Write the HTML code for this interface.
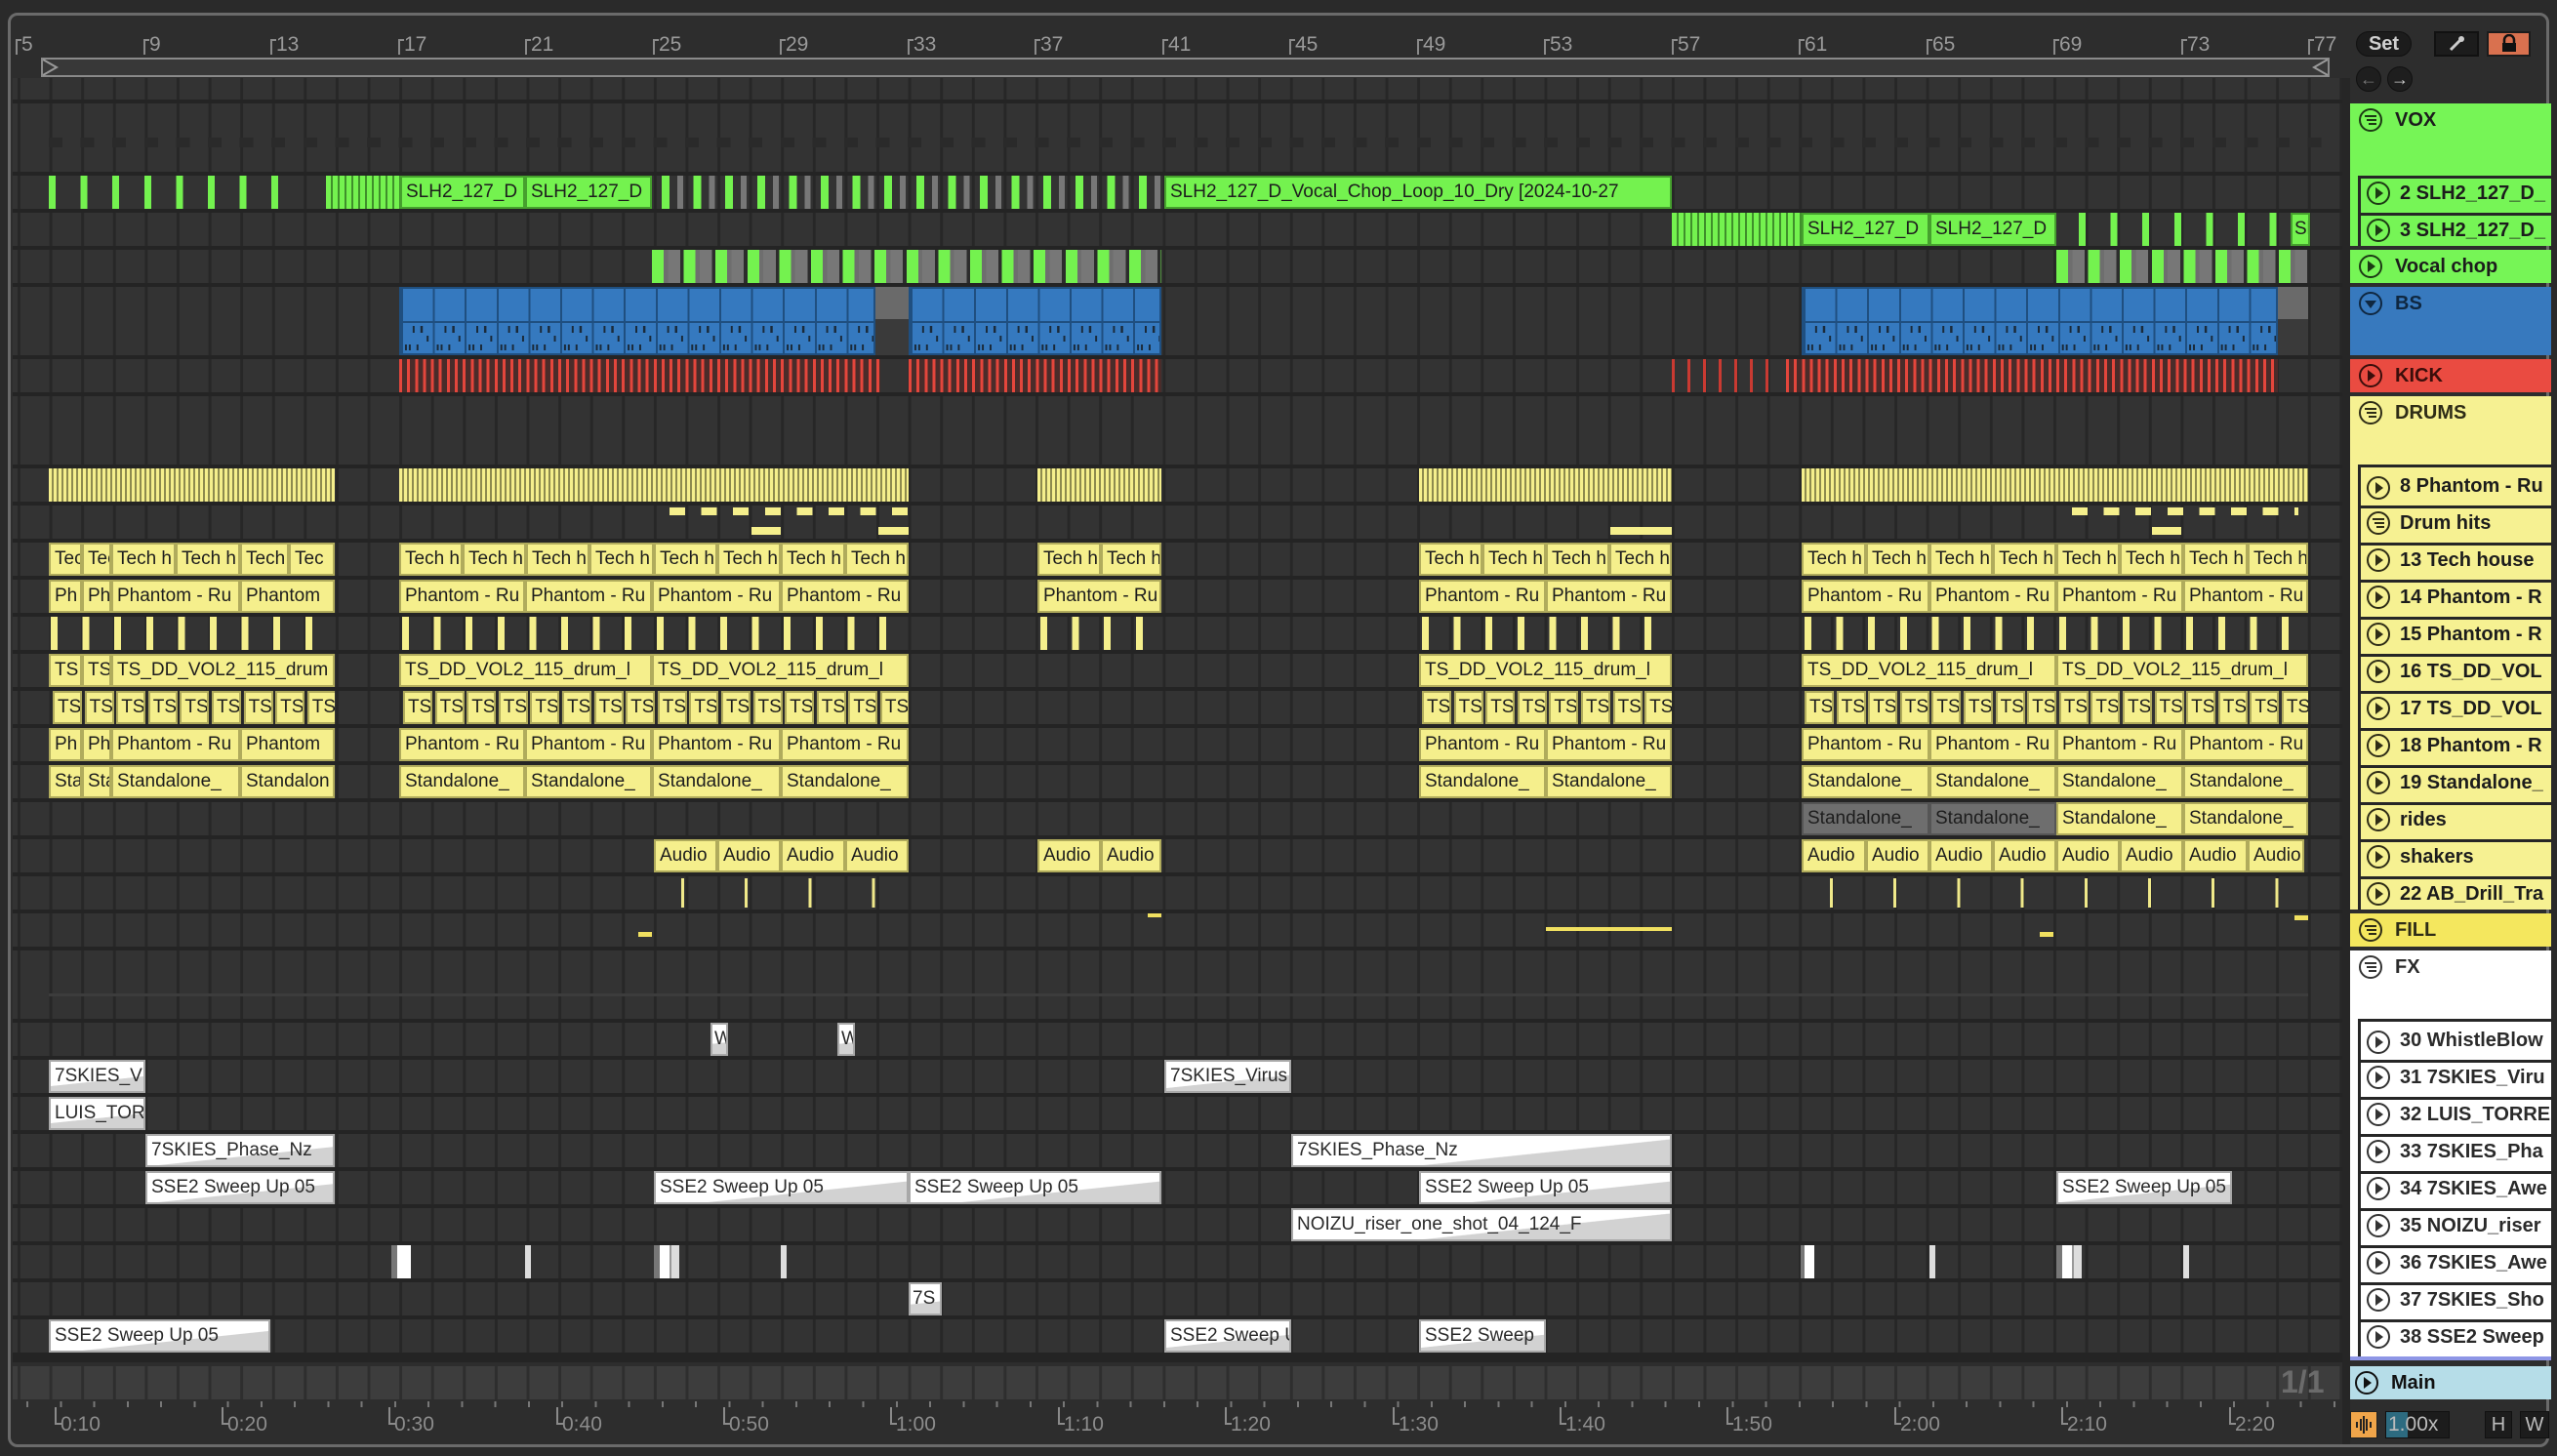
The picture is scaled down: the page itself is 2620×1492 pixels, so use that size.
<!DOCTYPE html>
<html><head><meta charset="utf-8"><style>
*{margin:0;padding:0;box-sizing:border-box}
body{width:2620px;height:1492px;background:#2a2a2a;position:relative;overflow:hidden;font-family:"Liberation Sans",sans-serif}
div{position:absolute}
.frame{left:8px;top:13px;width:2604px;height:1470px;border:3px solid #6a6a6a;border-radius:10px;background:#2d2d2d}
.r{left:13px;width:2387px;height:34px;background:repeating-linear-gradient(90deg,#272727 0 3px,transparent 3px 32.6px) 5px 0/32.6px 100% repeat-x,#333}
.t{height:70px}
.c{height:34px;border:2px solid;font-size:19px;line-height:30px;padding-left:4px;overflow:hidden;white-space:nowrap;color:#1d1d1d}
.y{background:#f5ef8c;border-color:#b0ab5c}
.g{background:#74f24f;border-color:#46a02e}
.w{background:linear-gradient(174deg,#fff 62%,#d2d2d2 63%);border-color:#a8a8a8;color:#2a2a2a}
.num{color:#9a9a9a;font-size:21px;top:34px}
.num:before{content:"";position:absolute;left:-6px;top:6px;width:4px;height:14px;border-left:2px solid #8a8a8a;border-top:2px solid #8a8a8a}
.tm{color:#8c8c8c;font-size:21px;top:1448px}
.tm:before{content:"";position:absolute;left:-6px;top:-6px;width:5px;height:16px;border-left:2px solid #8a8a8a;border-bottom:2px solid #8a8a8a}
.h{left:2408px;width:206px;height:34px;font-weight:bold;font-size:20px;color:#1c1c1c;line-height:34px;padding-left:46px;white-space:nowrap;overflow:hidden}
.ch{left:2416px;width:198px;border-left:3px solid #262626;border-top:3px solid #262626;padding-left:40px;line-height:31px}
.h svg{position:absolute;left:8px;top:4px}
.ch svg{left:5px;top:2px}
.ts{height:34px;white-space:nowrap;overflow:hidden;font-size:19px;color:#1d1d1d;line-height:30px}
.ts span{display:inline-block;width:30px;margin-right:2.6px;height:34px;background:#f5ef8c;border:2px solid #b0ab5c;padding-left:3px;overflow:hidden;vertical-align:top}
.bs{height:70px;border:2px solid #1f4f80;background:repeating-linear-gradient(90deg,#1f4f80 0 2px,transparent 2px 32.6px),linear-gradient(transparent 0 33px,#1f4f80 33px 35px,transparent 35px),repeating-linear-gradient(90deg,transparent 0 12px,#1a2a3a 12px 14px,transparent 14px 20px,#1a2a3a 20px 22px,transparent 22px 32.6px) 0 38px/32.6px 7px repeat-x,repeating-linear-gradient(90deg,transparent 0 26px,#1a2a3a 26px 28px,transparent 28px 32.6px) 0 48px/32.6px 6px repeat-x,repeating-linear-gradient(90deg,transparent 0 4px,#1a2a3a 4px 6px,transparent 6px 8px,#1a2a3a 8px 10px,transparent 10px 16px,#1a2a3a 16px 18px,transparent 18px 32.6px) 0 57px/32.6px 6px repeat-x,#3579bf}
</style></head><body>
<div class="frame"></div>
<div class="num" style="left:22px">5</div><div class="num" style="left:153px">9</div><div class="num" style="left:283px">13</div><div class="num" style="left:414px">17</div><div class="num" style="left:544px">21</div><div class="num" style="left:675px">25</div><div class="num" style="left:805px">29</div><div class="num" style="left:936px">33</div><div class="num" style="left:1066px">37</div><div class="num" style="left:1197px">41</div><div class="num" style="left:1327px">45</div><div class="num" style="left:1458px">49</div><div class="num" style="left:1588px">53</div><div class="num" style="left:1719px">57</div><div class="num" style="left:1849px">61</div><div class="num" style="left:1980px">65</div><div class="num" style="left:2110px">69</div><div class="num" style="left:2241px">73</div><div class="num" style="left:2371px">77</div>
<div style="left:42px;top:59px;width:2345px;height:20px;border:2px solid #8a8a8a;background:#383838"></div>
<svg style="position:absolute;left:42px;top:59px" width="20" height="20"><path d="M2 2 L16 10 L2 18" fill="none" stroke="#9a9a9a" stroke-width="2"/></svg>
<svg style="position:absolute;left:2367px;top:59px" width="20" height="20"><path d="M18 2 L4 10 L18 18" fill="none" stroke="#9a9a9a" stroke-width="2"/></svg>
<div style="left:13px;top:80px;width:2387px;height:1316px;background:#242424"></div>
<div class="r" style="top:80px;height:22px"></div>
<div class="r t" style="top:106px"></div>
<div class="r" style="top:180px"></div><div class="r" style="top:218px"></div><div class="r" style="top:256px"></div>
<div class="r t" style="top:294px"></div><div class="r" style="top:368px"></div><div class="r t" style="top:406px"></div>
<div class="r" style="top:480px"></div><div class="r" style="top:518px"></div><div class="r" style="top:556px"></div><div class="r" style="top:594px"></div><div class="r" style="top:632px"></div><div class="r" style="top:670px"></div><div class="r" style="top:708px"></div><div class="r" style="top:746px"></div><div class="r" style="top:784px"></div><div class="r" style="top:822px"></div><div class="r" style="top:860px"></div><div class="r" style="top:898px"></div><div class="r" style="top:936px"></div>
<div class="r t" style="top:974px"></div>
<div class="r" style="top:1048px"></div><div class="r" style="top:1086px"></div><div class="r" style="top:1124px"></div><div class="r" style="top:1162px"></div><div class="r" style="top:1200px"></div><div class="r" style="top:1238px"></div><div class="r" style="top:1276px"></div><div class="r" style="top:1314px"></div><div class="r" style="top:1352px"></div>
<div class="r" style="top:1400px;background:repeating-linear-gradient(90deg,#2e2e2e 0 3px,transparent 3px 32.6px) 5px 0/32.6px 100% repeat-x,#3d3d3d"></div>
<div style="left:2337px;top:1398px;color:#6b6b6b;font-weight:bold;font-size:32px">1/1</div>
<div style="left:50px;top:141px;width:2330px;height:10px;background:repeating-linear-gradient(90deg,#2a2a2a 0 14px,transparent 14px 32.6px)"></div>
<!-- VOX row 2 -->
<div style="left:50px;top:180px;width:250px;height:34px;background:repeating-linear-gradient(90deg,#74f24f 0 7px,transparent 7px 32.6px)"></div>
<div style="left:334px;top:180px;width:76px;height:34px;background:repeating-linear-gradient(90deg,#74f24f 0 5px,#3f8f2b 5px 7px)"></div>
<div class="c g" style="left:410px;top:180px;width:128px">SLH2_127_D</div>
<div class="c g" style="left:538px;top:180px;width:130px">SLH2_127_D</div>
<div style="left:678px;top:180px;width:512px;height:34px;background:repeating-linear-gradient(90deg,#74f24f 0 8px,transparent 8px 16px,#777 16px 22px,transparent 22px 32.6px)"></div>
<div class="c g" style="left:1193px;top:180px;width:520px">SLH2_127_D_Vocal_Chop_Loop_10_Dry [2024-10-27</div>
<div style="left:1713px;top:218px;width:133px;height:34px;background:repeating-linear-gradient(90deg,#74f24f 0 5px,#3f8f2b 5px 7px)"></div>
<div class="c g" style="left:1846px;top:218px;width:131px">SLH2_127_D</div>
<div class="c g" style="left:1977px;top:218px;width:130px">SLH2_127_D</div>
<div style="left:2130px;top:218px;width:225px;height:34px;background:repeating-linear-gradient(90deg,#74f24f 0 7px,transparent 7px 32.6px)"></div>
<div class="c g" style="left:2347px;top:218px;width:20px;padding-left:2px">Sl</div>
<div style="left:668px;top:256px;width:522px;height:34px;background:repeating-linear-gradient(90deg,#74f24f 0 12px,#6e6e6e 12px 16.3px,#777 16.3px 29px,#2c2c2c 29px 32.6px)"></div>
<div style="left:2107px;top:256px;width:258px;height:34px;background:repeating-linear-gradient(90deg,#74f24f 0 12px,#6e6e6e 12px 16.3px,#777 16.3px 29px,#2c2c2c 29px 32.6px)"></div>
<!-- BS -->
<div class="bs" style="left:409px;top:294px;width:488px"></div>
<div style="left:897px;top:294px;width:34px;height:70px;background:linear-gradient(#6a6a6a 0 33px,#3a3a3a 33px)"></div>
<div class="bs" style="left:931px;top:294px;width:259px"></div>
<div class="bs" style="left:1846px;top:294px;width:488px"></div>
<div style="left:2334px;top:294px;width:31px;height:70px;background:linear-gradient(#6a6a6a 0 33px,#3a3a3a 33px)"></div>
<!-- KICK -->
<div style="left:409px;top:368px;width:493px;height:34px;background:repeating-linear-gradient(90deg,#e4463c 0 3px,#4a2c2a 3px 8.15px)"></div>
<div style="left:931px;top:368px;width:259px;height:34px;background:repeating-linear-gradient(90deg,#e4463c 0 3px,#4a2c2a 3px 8.15px)"></div>
<div style="left:1713px;top:368px;width:100px;height:34px;background:repeating-linear-gradient(90deg,#c93a32 0 3px,transparent 3px 16px)"></div>
<div style="left:1830px;top:368px;width:504px;height:34px;background:repeating-linear-gradient(90deg,#e4463c 0 3px,#4a2c2a 3px 8.15px)"></div>
<!-- 8 Phantom stripes -->
<div style="left:50px;top:480px;width:293px;height:34px;background:repeating-linear-gradient(90deg,#f5ef8c 0 3px,#8d8a4e 3px 5px)"></div>
<div style="left:409px;top:480px;width:522px;height:34px;background:repeating-linear-gradient(90deg,#f5ef8c 0 3px,#8d8a4e 3px 5px)"></div>
<div style="left:1063px;top:480px;width:127px;height:34px;background:repeating-linear-gradient(90deg,#f5ef8c 0 3px,#8d8a4e 3px 5px)"></div>
<div style="left:1454px;top:480px;width:259px;height:34px;background:repeating-linear-gradient(90deg,#f5ef8c 0 3px,#8d8a4e 3px 5px)"></div>
<div style="left:1846px;top:480px;width:519px;height:34px;background:repeating-linear-gradient(90deg,#f5ef8c 0 3px,#8d8a4e 3px 5px)"></div>
<div style="left:678px;top:520px;width:253px;height:30px;background:repeating-linear-gradient(90deg,transparent 0 8px,#f5ef8c 8px 24px,transparent 24px 32.6px) 0 0/100% 8px no-repeat"></div>
<div style="left:770px;top:540px;width:30px;height:8px;background:#f5ef8c"></div><div style="left:900px;top:540px;width:31px;height:8px;background:#f5ef8c"></div>
<div style="left:1650px;top:540px;width:63px;height:8px;background:#f5ef8c"></div>
<div style="left:2115px;top:520px;width:240px;height:8px;background:repeating-linear-gradient(90deg,transparent 0 8px,#f5ef8c 8px 24px,transparent 24px 32.6px)"></div>
<div style="left:2205px;top:540px;width:30px;height:8px;background:#f5ef8c"></div>
<!-- 13 Tech house -->
<div class="c y" style="left:50px;top:556px;width:34px">Tech</div><div class="c y" style="left:84px;top:556px;width:30px">Tech</div><div class="c y" style="left:114px;top:556px;width:66px">Tech h</div><div class="c y" style="left:180px;top:556px;width:66px">Tech h</div><div class="c y" style="left:246px;top:556px;width:50px">Tech h</div><div class="c y" style="left:296px;top:556px;width:47px">Tec</div>
<div class="c y" style="left:409px;top:556px;width:65px">Tech h</div><div class="c y" style="left:474px;top:556px;width:65px">Tech h</div><div class="c y" style="left:539px;top:556px;width:65px">Tech h</div><div class="c y" style="left:604px;top:556px;width:66px">Tech h</div><div class="c y" style="left:670px;top:556px;width:65px">Tech h</div><div class="c y" style="left:735px;top:556px;width:65px">Tech h</div><div class="c y" style="left:800px;top:556px;width:66px">Tech h</div><div class="c y" style="left:866px;top:556px;width:65px">Tech h</div>
<div class="c y" style="left:1063px;top:556px;width:65px">Tech h</div><div class="c y" style="left:1128px;top:556px;width:62px">Tech h</div>
<div class="c y" style="left:1454px;top:556px;width:65px">Tech h</div><div class="c y" style="left:1519px;top:556px;width:65px">Tech h</div><div class="c y" style="left:1584px;top:556px;width:65px">Tech h</div><div class="c y" style="left:1649px;top:556px;width:64px">Tech h</div>
<div class="c y" style="left:1846px;top:556px;width:66px">Tech h</div><div class="c y" style="left:1912px;top:556px;width:65px">Tech h</div><div class="c y" style="left:1977px;top:556px;width:65px">Tech h</div><div class="c y" style="left:2042px;top:556px;width:65px">Tech h</div><div class="c y" style="left:2107px;top:556px;width:65px">Tech h</div><div class="c y" style="left:2172px;top:556px;width:65px">Tech h</div><div class="c y" style="left:2237px;top:556px;width:66px">Tech h</div><div class="c y" style="left:2303px;top:556px;width:62px">Tech h</div>
<!-- 14 Phantom -->
<div class="c y" style="left:50px;top:594px;width:34px">Ph</div><div class="c y" style="left:84px;top:594px;width:30px">Ph</div><div class="c y" style="left:114px;top:594px;width:132px">Phantom - Ru</div><div class="c y" style="left:246px;top:594px;width:97px">Phantom</div>
<div class="c y" style="left:409px;top:594px;width:129px">Phantom - Ru</div><div class="c y" style="left:538px;top:594px;width:130px">Phantom - Ru</div><div class="c y" style="left:668px;top:594px;width:132px">Phantom - Ru</div><div class="c y" style="left:800px;top:594px;width:131px">Phantom - Ru</div>
<div class="c y" style="left:1063px;top:594px;width:127px">Phantom - Ru</div>
<div class="c y" style="left:1454px;top:594px;width:130px">Phantom - Ru</div><div class="c y" style="left:1584px;top:594px;width:129px">Phantom - Ru</div>
<div class="c y" style="left:1846px;top:594px;width:131px">Phantom - Ru</div><div class="c y" style="left:1977px;top:594px;width:130px">Phantom - Ru</div><div class="c y" style="left:2107px;top:594px;width:130px">Phantom - Ru</div><div class="c y" style="left:2237px;top:594px;width:128px">Phantom - Ru</div>
<!-- 15 -->
<div style="left:52px;top:632px;width:291px;height:34px;background:repeating-linear-gradient(90deg,#f5ef8c 0 7px,transparent 7px 32.6px)"></div>
<div style="left:412px;top:632px;width:519px;height:34px;background:repeating-linear-gradient(90deg,#f5ef8c 0 7px,transparent 7px 32.6px)"></div>
<div style="left:1066px;top:632px;width:124px;height:34px;background:repeating-linear-gradient(90deg,#f5ef8c 0 7px,transparent 7px 32.6px)"></div>
<div style="left:1457px;top:632px;width:256px;height:34px;background:repeating-linear-gradient(90deg,#f5ef8c 0 7px,transparent 7px 32.6px)"></div>
<div style="left:1849px;top:632px;width:516px;height:34px;background:repeating-linear-gradient(90deg,#f5ef8c 0 7px,transparent 7px 32.6px)"></div>
<!-- 16 TS -->
<div class="c y" style="left:50px;top:670px;width:34px">TS</div><div class="c y" style="left:84px;top:670px;width:30px">TS</div><div class="c y" style="left:114px;top:670px;width:229px">TS_DD_VOL2_115_drum</div>
<div class="c y" style="left:409px;top:670px;width:259px">TS_DD_VOL2_115_drum_l</div><div class="c y" style="left:668px;top:670px;width:263px">TS_DD_VOL2_115_drum_l</div>
<div class="c y" style="left:1454px;top:670px;width:259px">TS_DD_VOL2_115_drum_l</div>
<div class="c y" style="left:1846px;top:670px;width:261px">TS_DD_VOL2_115_drum_l</div><div class="c y" style="left:2107px;top:670px;width:258px">TS_DD_VOL2_115_drum_l</div>
<!-- 17 TS small -->
<div class="ts" style="left:54px;top:708px;width:289px"><span>TS</span><span>TS</span><span>TS</span><span>TS</span><span>TS</span><span>TS</span><span>TS</span><span>TS</span><span>TS</span></div>
<div class="ts" style="left:413px;top:708px;width:518px"><span>TS</span><span>TS</span><span>TS</span><span>TS</span><span>TS</span><span>TS</span><span>TS</span><span>TS</span><span>TS</span><span>TS</span><span>TS</span><span>TS</span><span>TS</span><span>TS</span><span>TS</span><span>TS</span></div>
<div class="ts" style="left:1457px;top:708px;width:256px"><span>TS</span><span>TS</span><span>TS</span><span>TS</span><span>TS</span><span>TS</span><span>TS</span><span>TS</span></div>
<div class="ts" style="left:1849px;top:708px;width:516px"><span>TS</span><span>TS</span><span>TS</span><span>TS</span><span>TS</span><span>TS</span><span>TS</span><span>TS</span><span>TS</span><span>TS</span><span>TS</span><span>TS</span><span>TS</span><span>TS</span><span>TS</span><span>TS</span></div>
<!-- 18 Phantom -->
<div class="c y" style="left:50px;top:746px;width:34px">Ph</div><div class="c y" style="left:84px;top:746px;width:30px">Ph</div><div class="c y" style="left:114px;top:746px;width:132px">Phantom - Ru</div><div class="c y" style="left:246px;top:746px;width:97px">Phantom</div>
<div class="c y" style="left:409px;top:746px;width:129px">Phantom - Ru</div><div class="c y" style="left:538px;top:746px;width:130px">Phantom - Ru</div><div class="c y" style="left:668px;top:746px;width:132px">Phantom - Ru</div><div class="c y" style="left:800px;top:746px;width:131px">Phantom - Ru</div>
<div class="c y" style="left:1454px;top:746px;width:130px">Phantom - Ru</div><div class="c y" style="left:1584px;top:746px;width:129px">Phantom - Ru</div>
<div class="c y" style="left:1846px;top:746px;width:131px">Phantom - Ru</div><div class="c y" style="left:1977px;top:746px;width:130px">Phantom - Ru</div><div class="c y" style="left:2107px;top:746px;width:130px">Phantom - Ru</div><div class="c y" style="left:2237px;top:746px;width:128px">Phantom - Ru</div>
<!-- 19 Standalone -->
<div class="c y" style="left:50px;top:784px;width:34px">Sta</div><div class="c y" style="left:84px;top:784px;width:30px">Sta</div><div class="c y" style="left:114px;top:784px;width:132px">Standalone_</div><div class="c y" style="left:246px;top:784px;width:97px">Standalon</div>
<div class="c y" style="left:409px;top:784px;width:129px">Standalone_</div><div class="c y" style="left:538px;top:784px;width:130px">Standalone_</div><div class="c y" style="left:668px;top:784px;width:132px">Standalone_</div><div class="c y" style="left:800px;top:784px;width:131px">Standalone_</div>
<div class="c y" style="left:1454px;top:784px;width:130px">Standalone_</div><div class="c y" style="left:1584px;top:784px;width:129px">Standalone_</div>
<div class="c y" style="left:1846px;top:784px;width:131px">Standalone_</div><div class="c y" style="left:1977px;top:784px;width:130px">Standalone_</div><div class="c y" style="left:2107px;top:784px;width:130px">Standalone_</div><div class="c y" style="left:2237px;top:784px;width:128px">Standalone_</div>
<!-- rides -->
<div class="c" style="left:1846px;top:822px;width:131px;background:#6e6e6e;border-color:#555">Standalone_</div><div class="c" style="left:1977px;top:822px;width:130px;background:#6e6e6e;border-color:#555">Standalone_</div><div class="c y" style="left:2107px;top:822px;width:130px">Standalone_</div><div class="c y" style="left:2237px;top:822px;width:128px">Standalone_</div>
<!-- shakers -->
<div class="c y" style="left:670px;top:860px;width:65px">Audio</div><div class="c y" style="left:735px;top:860px;width:65px">Audio</div><div class="c y" style="left:800px;top:860px;width:66px">Audio</div><div class="c y" style="left:866px;top:860px;width:65px">Audio</div>
<div class="c y" style="left:1063px;top:860px;width:65px">Audio</div><div class="c y" style="left:1128px;top:860px;width:62px">Audio</div>
<div class="c y" style="left:1846px;top:860px;width:66px">Audio</div><div class="c y" style="left:1912px;top:860px;width:65px">Audio</div><div class="c y" style="left:1977px;top:860px;width:65px">Audio</div><div class="c y" style="left:2042px;top:860px;width:65px">Audio</div><div class="c y" style="left:2107px;top:860px;width:65px">Audio</div><div class="c y" style="left:2172px;top:860px;width:65px">Audio</div><div class="c y" style="left:2237px;top:860px;width:66px">Audio</div><div class="c y" style="left:2303px;top:860px;width:58px">Audio</div>
<div style="left:698px;top:900px;width:233px;height:30px;background:repeating-linear-gradient(90deg,#f0e98a 0 3px,transparent 3px 65.2px)"></div>
<div style="left:1176px;top:936px;width:14px;height:4px;background:#f0e060"></div>
<div style="left:1875px;top:900px;width:490px;height:30px;background:repeating-linear-gradient(90deg,#f0e98a 0 3px,transparent 3px 65.2px)"></div>
<div style="left:654px;top:955px;width:14px;height:5px;background:#f0e060"></div>
<div style="left:1584px;top:950px;width:129px;height:4px;background:#f0e060"></div>
<div style="left:2090px;top:955px;width:14px;height:5px;background:#f0e060"></div>
<div style="left:2351px;top:938px;width:14px;height:5px;background:#f0e060"></div>
<div style="left:50px;top:1018px;width:2315px;height:3px;background:#3c3c3c"></div>
<!-- FX clips -->
<div class="c w" style="left:728px;top:1048px;width:18px;padding-left:2px">W</div><div class="c w" style="left:858px;top:1048px;width:18px;padding-left:2px">W</div>
<div class="c w" style="left:50px;top:1086px;width:99px">7SKIES_V</div><div class="c w" style="left:1193px;top:1086px;width:130px">7SKIES_Virus</div>
<div class="c w" style="left:50px;top:1124px;width:99px">LUIS_TOR</div>
<div class="c w" style="left:149px;top:1162px;width:194px">7SKIES_Phase_Nz</div><div class="c w" style="left:1323px;top:1162px;width:390px">7SKIES_Phase_Nz</div>
<div class="c w" style="left:149px;top:1200px;width:194px">SSE2 Sweep Up 05</div><div class="c w" style="left:670px;top:1200px;width:261px">SSE2 Sweep Up 05</div><div class="c w" style="left:931px;top:1200px;width:259px">SSE2 Sweep Up 05</div><div class="c w" style="left:1454px;top:1200px;width:259px">SSE2 Sweep Up 05</div><div class="c w" style="left:2107px;top:1200px;width:180px">SSE2 Sweep Up 05</div>
<div class="c w" style="left:1323px;top:1238px;width:390px">NOIZU_riser_one_shot_04_124_F</div>
<div style="left:401px;top:1276px;width:20px;height:34px;background:linear-gradient(90deg,#777 0 6px,#fff 6px)"></div><div style="left:538px;top:1276px;width:6px;height:34px;background:#ddd"></div><div style="left:670px;top:1276px;width:26px;height:34px;background:linear-gradient(90deg,#777 0 6px,#fff 6px 16px,#999 16px 18px,#ddd 18px)"></div><div style="left:800px;top:1276px;width:6px;height:34px;background:#ddd"></div>
<div style="left:1845px;top:1276px;width:14px;height:34px;background:linear-gradient(90deg,#777 0 4px,#fff 4px)"></div><div style="left:1977px;top:1276px;width:6px;height:34px;background:#ddd"></div><div style="left:2107px;top:1276px;width:26px;height:34px;background:linear-gradient(90deg,#777 0 6px,#fff 6px 16px,#999 16px 18px,#ddd 18px)"></div><div style="left:2237px;top:1276px;width:6px;height:34px;background:#ddd"></div>
<div class="c w" style="left:931px;top:1314px;width:34px;padding-left:2px">7S</div>
<div class="c w" style="left:50px;top:1352px;width:227px">SSE2 Sweep Up 05</div><div class="c w" style="left:1193px;top:1352px;width:130px">SSE2 Sweep U</div><div class="c w" style="left:1454px;top:1352px;width:130px">SSE2 Sweep</div>
<!-- bottom time ruler -->
<div style="left:13px;top:1436px;width:2387px;height:6px;background:repeating-linear-gradient(90deg,#777 0 2px,transparent 2px 34.26px) 14px 0"></div>
<div class="tm" style="left:62px">0:10</div><div class="tm" style="left:233px">0:20</div><div class="tm" style="left:404px">0:30</div><div class="tm" style="left:576px">0:40</div><div class="tm" style="left:747px">0:50</div><div class="tm" style="left:918px">1:00</div><div class="tm" style="left:1090px">1:10</div><div class="tm" style="left:1261px">1:20</div><div class="tm" style="left:1433px">1:30</div><div class="tm" style="left:1604px">1:40</div><div class="tm" style="left:1775px">1:50</div><div class="tm" style="left:1947px">2:00</div><div class="tm" style="left:2118px">2:10</div><div class="tm" style="left:2290px">2:20</div>
<!-- right panel -->
<div style="left:2400px;top:80px;width:8px;height:1400px;background:#262626"></div>
<div style="left:2414px;top:32px;width:57px;height:26px;border-radius:13px;background:#1c1c1c;border:1px solid #111;color:#cfcfcf;font-size:20px;font-weight:bold;text-align:center;line-height:24px">Set</div>
<div style="left:2494px;top:32px;width:46px;height:26px;background:#1c1c1c;border:2px solid #111"></div>
<svg style="position:absolute;left:2508px;top:36px" width="18" height="18"><path d="M3 15 L14 4" stroke="#ccc" stroke-width="3"/><circle cx="14" cy="4" r="3" fill="#ccc"/></svg>
<div style="left:2548px;top:32px;width:45px;height:26px;background:#d9714f;border:2px solid #1c1c1c"></div>
<svg style="position:absolute;left:2561px;top:35px" width="20" height="20"><path d="M5 9 V6 a5 5 0 0 1 10 0 V9" fill="none" stroke="#111" stroke-width="2.5"/><rect x="3" y="9" width="14" height="9" fill="#111"/></svg>
<div style="left:2414px;top:68px;width:26px;height:26px;border-radius:13px;background:#1e1e1e;border:1px solid #111;color:#777;font-size:18px;text-align:center;line-height:24px">←</div>
<div style="left:2446px;top:68px;width:26px;height:26px;border-radius:13px;background:#1e1e1e;border:1px solid #111;color:#ccc;font-size:18px;text-align:center;line-height:24px">→</div>
<!-- headers -->
<div style="left:2408px;top:106px;width:206px;height:146px;background:#76f556"></div>
<div class="h" style="top:106px;height:70px;background:#76f556"><svg width="26" height="26"><circle cx="13" cy="13" r="11" fill="none" stroke="#1c3a14" stroke-width="2"/><path d="M7 9h12M9 13h10M11 17h8" stroke="#1c3a14" stroke-width="2"/></svg>VOX</div>
<div class="h ch" style="top:180px;height:38px;background:#76f556"><svg width="26" height="26"><circle cx="13" cy="13" r="11" fill="none" stroke="#1c3a14" stroke-width="2"/><path d="M10 7 L18 13 L10 19Z" fill="#1c3a14"/></svg>2 SLH2_127_D_</div>
<div class="h ch" style="top:218px;height:34px;background:#76f556"><svg width="26" height="26"><circle cx="13" cy="13" r="11" fill="none" stroke="#1c3a14" stroke-width="2"/><path d="M10 7 L18 13 L10 19Z" fill="#1c3a14"/></svg>3 SLH2_127_D_</div>
<div class="h" style="top:256px;background:#76f556"><svg width="26" height="26"><circle cx="13" cy="13" r="11" fill="none" stroke="#1c3a14" stroke-width="2"/><path d="M10 7 L18 13 L10 19Z" fill="#1c3a14"/></svg>Vocal chop</div>
<div class="h" style="top:294px;height:70px;background:#3779be;color:#0f2740"><svg width="26" height="26"><circle cx="13" cy="13" r="11" fill="none" stroke="#0f2740" stroke-width="2"/><path d="M7 10 L19 10 L13 18Z" fill="#0f2740"/></svg>BS</div>
<div class="h" style="top:368px;background:#ea4b41;color:#3a0e0b"><svg width="26" height="26"><circle cx="13" cy="13" r="11" fill="none" stroke="#3a0e0b" stroke-width="2"/><path d="M10 7 L18 13 L10 19Z" fill="#3a0e0b"/></svg>KICK</div>
<div style="left:2408px;top:406px;width:206px;height:526px;background:#f6f192"></div>
<div class="h" style="top:406px;height:70px;background:#f6f192;color:#2e2c16"><svg width="26" height="26"><circle cx="13" cy="13" r="11" fill="none" stroke="#2e2c16" stroke-width="2"/><path d="M7 9h12M9 13h10M11 17h8" stroke="#2e2c16" stroke-width="2"/></svg>DRUMS</div>
<div class="h ch" style="top:476px;height:42px;background:#f6f192;padding-top:4px"><svg width="26" height="26" style="top:8px"><circle cx="13" cy="13" r="11" fill="none" stroke="#2e2c16" stroke-width="2"/><path d="M10 7 L18 13 L10 19Z" fill="#2e2c16"/></svg>8 Phantom - Ru</div>
<div class="h ch" style="top:518px;height:38px;background:#f6f192"><svg width="26" height="26"><circle cx="13" cy="13" r="11" fill="none" stroke="#2e2c16" stroke-width="2"/><path d="M7 9h12M9 13h10M11 17h8" stroke="#2e2c16" stroke-width="2"/></svg>Drum hits</div>
<div class="h ch" style="top:556px;height:38px;background:#f6f192"><svg width="26" height="26"><circle cx="13" cy="13" r="11" fill="none" stroke="#2e2c16" stroke-width="2"/><path d="M10 7 L18 13 L10 19Z" fill="#2e2c16"/></svg>13 Tech house</div>
<div class="h ch" style="top:594px;height:38px;background:#f6f192"><svg width="26" height="26"><circle cx="13" cy="13" r="11" fill="none" stroke="#2e2c16" stroke-width="2"/><path d="M10 7 L18 13 L10 19Z" fill="#2e2c16"/></svg>14 Phantom - R</div>
<div class="h ch" style="top:632px;height:38px;background:#f6f192"><svg width="26" height="26"><circle cx="13" cy="13" r="11" fill="none" stroke="#2e2c16" stroke-width="2"/><path d="M10 7 L18 13 L10 19Z" fill="#2e2c16"/></svg>15 Phantom - R</div>
<div class="h ch" style="top:670px;height:38px;background:#f6f192"><svg width="26" height="26"><circle cx="13" cy="13" r="11" fill="none" stroke="#2e2c16" stroke-width="2"/><path d="M10 7 L18 13 L10 19Z" fill="#2e2c16"/></svg>16 TS_DD_VOL</div>
<div class="h ch" style="top:708px;height:38px;background:#f6f192"><svg width="26" height="26"><circle cx="13" cy="13" r="11" fill="none" stroke="#2e2c16" stroke-width="2"/><path d="M10 7 L18 13 L10 19Z" fill="#2e2c16"/></svg>17 TS_DD_VOL</div>
<div class="h ch" style="top:746px;height:38px;background:#f6f192"><svg width="26" height="26"><circle cx="13" cy="13" r="11" fill="none" stroke="#2e2c16" stroke-width="2"/><path d="M10 7 L18 13 L10 19Z" fill="#2e2c16"/></svg>18 Phantom - R</div>
<div class="h ch" style="top:784px;height:38px;background:#f6f192"><svg width="26" height="26"><circle cx="13" cy="13" r="11" fill="none" stroke="#2e2c16" stroke-width="2"/><path d="M10 7 L18 13 L10 19Z" fill="#2e2c16"/></svg>19 Standalone_</div>
<div class="h ch" style="top:822px;height:38px;background:#f6f192"><svg width="26" height="26"><circle cx="13" cy="13" r="11" fill="none" stroke="#2e2c16" stroke-width="2"/><path d="M10 7 L18 13 L10 19Z" fill="#2e2c16"/></svg>rides</div>
<div class="h ch" style="top:860px;height:38px;background:#f6f192"><svg width="26" height="26"><circle cx="13" cy="13" r="11" fill="none" stroke="#2e2c16" stroke-width="2"/><path d="M10 7 L18 13 L10 19Z" fill="#2e2c16"/></svg>shakers</div>
<div class="h ch" style="top:898px;height:34px;background:#f6f192"><svg width="26" height="26"><circle cx="13" cy="13" r="11" fill="none" stroke="#2e2c16" stroke-width="2"/><path d="M10 7 L18 13 L10 19Z" fill="#2e2c16"/></svg>22 AB_Drill_Tra</div>
<div class="h" style="top:936px;background:#f4e75e;color:#2e2c16"><svg width="26" height="26"><circle cx="13" cy="13" r="11" fill="none" stroke="#2e2c16" stroke-width="2"/><path d="M7 9h12M9 13h10M11 17h8" stroke="#2e2c16" stroke-width="2"/></svg>FILL</div>
<div style="left:2408px;top:974px;width:206px;height:416px;background:#fff"></div>
<div class="h" style="top:974px;height:70px;background:#fff;color:#2a2a2a"><svg width="26" height="26"><circle cx="13" cy="13" r="11" fill="none" stroke="#333" stroke-width="2"/><path d="M7 9h12M9 13h10M11 17h8" stroke="#333" stroke-width="2"/></svg>FX</div>
<div class="h ch" style="top:1044px;height:42px;background:#fff;color:#2a2a2a;padding-top:4px"><svg width="26" height="26" style="top:8px"><circle cx="13" cy="13" r="11" fill="none" stroke="#333" stroke-width="2"/><path d="M10 7 L18 13 L10 19Z" fill="#333"/></svg>30 WhistleBlow</div>
<div class="h ch" style="top:1086px;height:38px;background:#fff;color:#2a2a2a"><svg width="26" height="26"><circle cx="13" cy="13" r="11" fill="none" stroke="#333" stroke-width="2"/><path d="M10 7 L18 13 L10 19Z" fill="#333"/></svg>31 7SKIES_Viru</div>
<div class="h ch" style="top:1124px;height:38px;background:#fff;color:#2a2a2a"><svg width="26" height="26"><circle cx="13" cy="13" r="11" fill="none" stroke="#333" stroke-width="2"/><path d="M10 7 L18 13 L10 19Z" fill="#333"/></svg>32 LUIS_TORRE</div>
<div class="h ch" style="top:1162px;height:38px;background:#fff;color:#2a2a2a"><svg width="26" height="26"><circle cx="13" cy="13" r="11" fill="none" stroke="#333" stroke-width="2"/><path d="M10 7 L18 13 L10 19Z" fill="#333"/></svg>33 7SKIES_Pha</div>
<div class="h ch" style="top:1200px;height:38px;background:#fff;color:#2a2a2a"><svg width="26" height="26"><circle cx="13" cy="13" r="11" fill="none" stroke="#333" stroke-width="2"/><path d="M10 7 L18 13 L10 19Z" fill="#333"/></svg>34 7SKIES_Awe</div>
<div class="h ch" style="top:1238px;height:38px;background:#fff;color:#2a2a2a"><svg width="26" height="26"><circle cx="13" cy="13" r="11" fill="none" stroke="#333" stroke-width="2"/><path d="M10 7 L18 13 L10 19Z" fill="#333"/></svg>35 NOIZU_riser</div>
<div class="h ch" style="top:1276px;height:38px;background:#fff;color:#2a2a2a"><svg width="26" height="26"><circle cx="13" cy="13" r="11" fill="none" stroke="#333" stroke-width="2"/><path d="M10 7 L18 13 L10 19Z" fill="#333"/></svg>36 7SKIES_Awe</div>
<div class="h ch" style="top:1314px;height:38px;background:#fff;color:#2a2a2a"><svg width="26" height="26"><circle cx="13" cy="13" r="11" fill="none" stroke="#333" stroke-width="2"/><path d="M10 7 L18 13 L10 19Z" fill="#333"/></svg>37 7SKIES_Sho</div>
<div class="h ch" style="top:1352px;height:38px;background:#fff;color:#2a2a2a"><svg width="26" height="26"><circle cx="13" cy="13" r="11" fill="none" stroke="#333" stroke-width="2"/><path d="M10 7 L18 13 L10 19Z" fill="#333"/></svg>38 SSE2 Sweep</div>
<div style="left:2408px;top:1390px;width:206px;height:4px;background:#8e96e6"></div>
<div class="h" style="top:1400px;background:#b6dde8;color:#111;padding-left:42px"><svg width="26" height="26" style="left:4px"><circle cx="13" cy="13" r="11" fill="none" stroke="#111" stroke-width="2"/><path d="M10 7 L18 13 L10 19Z" fill="#111"/></svg>Main</div>
<div style="left:2408px;top:1446px;width:28px;height:28px;background:#f0a54a;border:1px solid #222"></div>
<svg style="position:absolute;left:2412px;top:1450px" width="20" height="20"><path d="M3 7v6M7 4v12M10 1v18M13 4v12M17 7v6" stroke="#222" stroke-width="2"/></svg>
<div style="left:2444px;top:1446px;width:66px;height:28px;background:#1c1c1c;border:1px solid #111;color:#bbb;font-size:21px;line-height:26px;padding-left:2px"><span style="position:absolute;left:0;top:0;width:22px;height:26px;background:#2d6b80"></span><span style="position:relative">1.00x</span></div>
<div style="left:2546px;top:1446px;width:28px;height:28px;background:#1c1c1c;border:1px solid #111;color:#bbb;font-size:20px;text-align:center;line-height:26px">H</div>
<div style="left:2582px;top:1446px;width:30px;height:28px;background:#1c1c1c;border:1px solid #111;color:#bbb;font-size:20px;text-align:center;line-height:26px">W</div>
</body></html>
